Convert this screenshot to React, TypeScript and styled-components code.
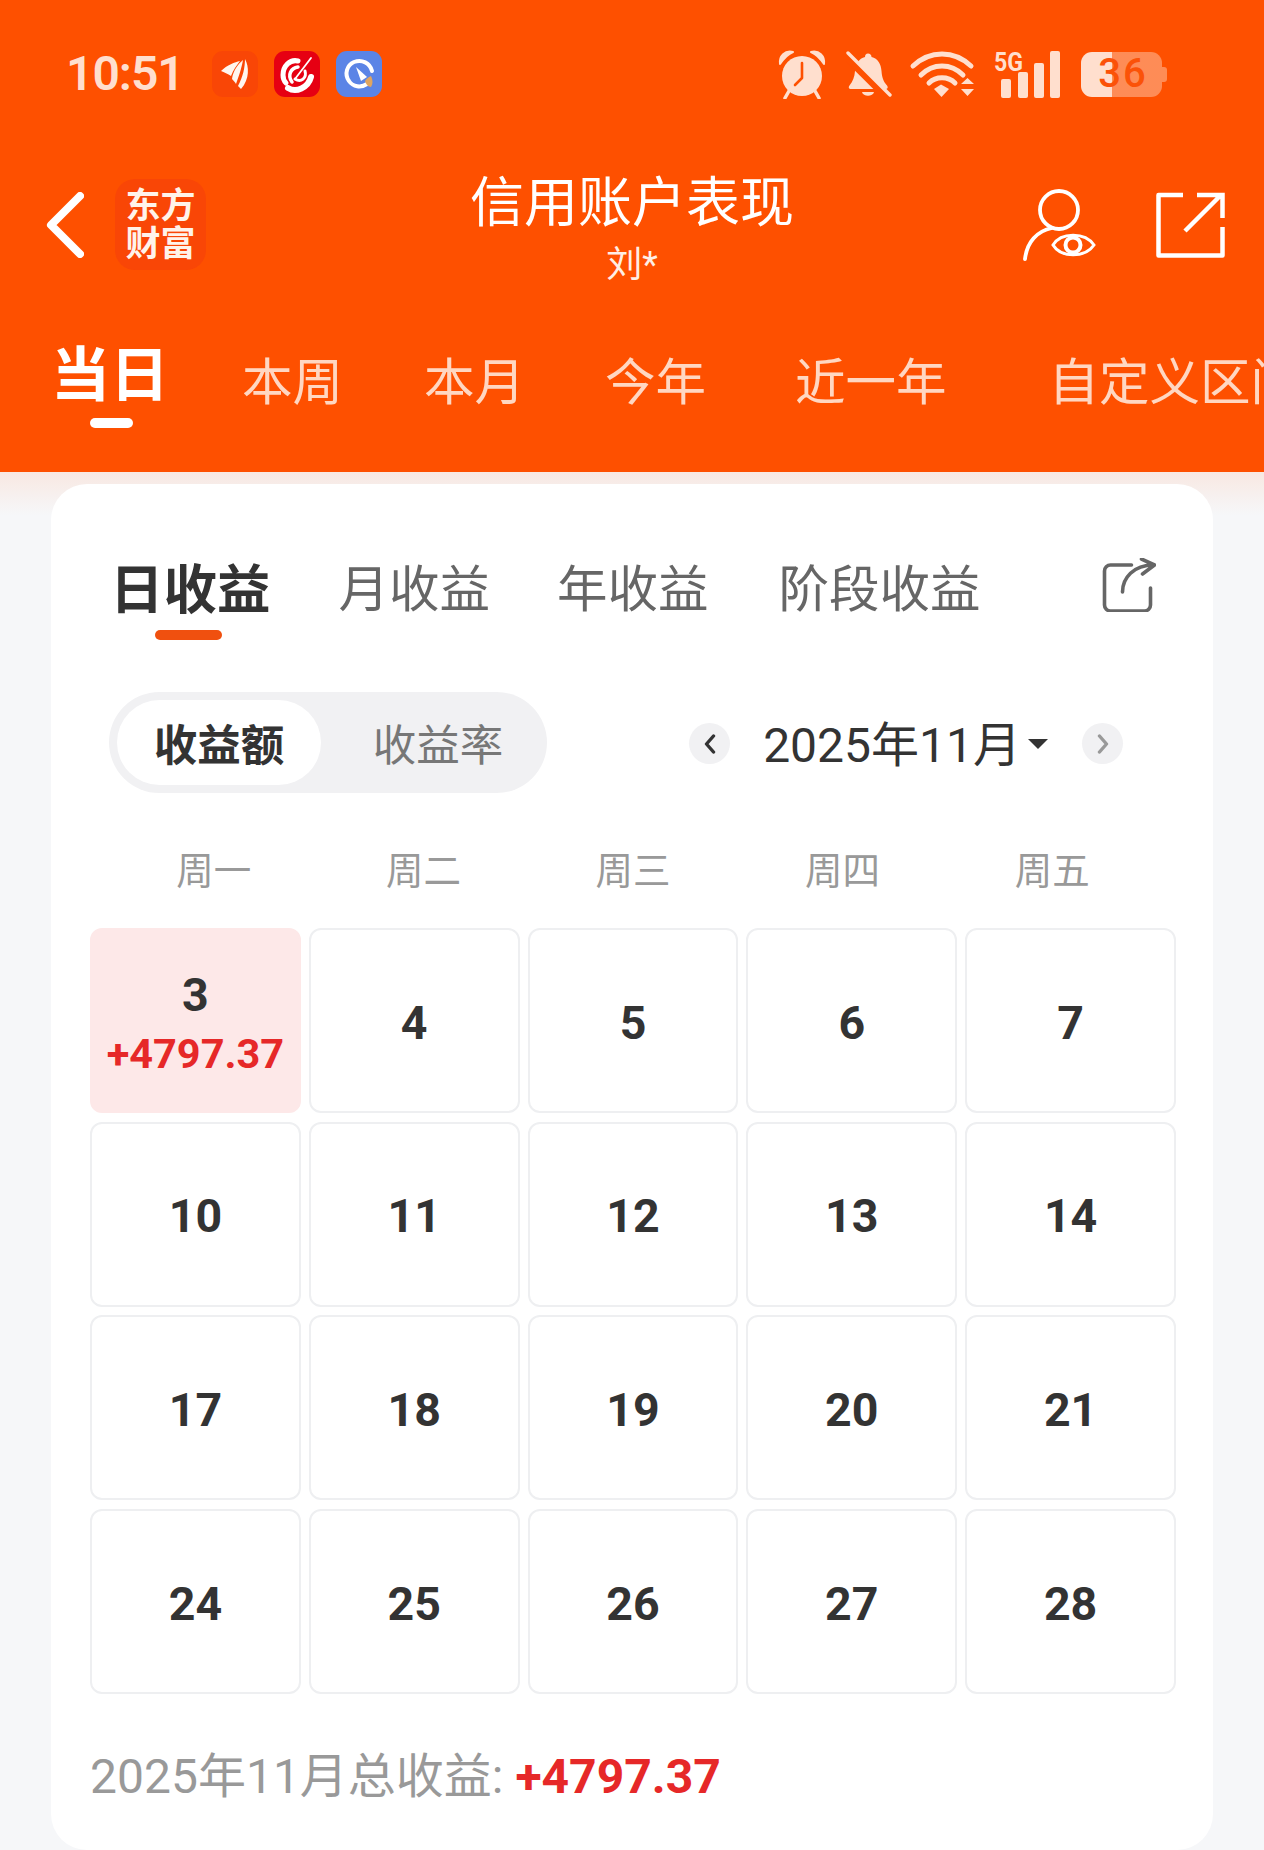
import styled, { createGlobalStyle } from 'styled-components';

const PALE = '#ffdfce';
const ORANGE = '#fe5000';

const GlobalStyle = createGlobalStyle`
  html, body {
    margin: 0;
    padding: 0;
    background: #f6f7f9;
  }
  body {
    font-family: Roboto, "Noto Sans CJK SC", sans-serif;
  }
`;

const Page = styled.div`
  width: 1264px;
  height: 1850px;
  overflow: hidden;
  background: linear-gradient(#f8e8e2 472px, #f6f7f9 515px);
`;

const Header = styled.header`
  height: 472px;
  background: ${ORANGE};
  overflow: hidden;
`;

const StatusBar = styled.div`
  height: 148px;
  padding: 0 97px 0 66px;
  display: flex;
  align-items: center;
  justify-content: space-between;
  color: ${PALE};
`;

const StatusGroup = styled.div<{ $gap: number }>`
  display: flex;
  align-items: center;
  gap: ${(p) => p.$gap}px;
`;

const Clock = styled.span`
  width: 130px;
  font-size: 48px;
  font-weight: 600;
  letter-spacing: -1px;
  line-height: 1;
`;

const AppIcon = styled.div<{ $bg: string }>`
  width: 46px;
  height: 46px;
  border-radius: 11px;
  background: ${(p) => p.$bg};
  display: flex;
`;

const Signal = styled.div`
  position: relative;
  width: 66px;
  height: 47px;
`;

const NetworkBadge = styled.span`
  position: absolute;
  left: 0;
  top: -2px;
  font-size: 26px;
  font-weight: 700;
  line-height: 1;
  transform: scaleX(0.89);
  transform-origin: left center;
`;

const Battery = styled.div`
  display: flex;
  align-items: center;
  margin-left: 1px;
`;

const BatteryBody = styled.div`
  width: 81px;
  height: 45px;
  border-radius: 11px;
  background: linear-gradient(90deg, ${PALE} 38%, rgba(255, 223, 206, 0.42) 38%);
  display: flex;
  align-items: center;
  justify-content: center;
  padding-left: 3px;
  box-sizing: border-box;
  color: #fb5208;
  font-size: 40px;
  font-weight: 500;
  letter-spacing: 2px;
  line-height: 1;
`;

const BatteryTip = styled.div`
  width: 5px;
  height: 15px;
  border-radius: 0 3px 3px 0;
  background: rgba(255, 223, 206, 0.42);
`;

const NavRow = styled.div`
  height: 153px;
  padding: 0 39px;
  display: grid;
  grid-template-columns: 1fr auto 1fr;
  align-items: center;
  color: #fff;
`;

const NavLeft = styled.div`
  padding-left: 7px;
  display: flex;
  align-items: center;
  gap: 31px;
`;

const NavRight = styled.div`
  display: flex;
  align-items: center;
  justify-content: flex-end;
  gap: 60px;
`;

const Logo = styled.div`
  width: 91px;
  height: 91px;
  padding-top: 3px;
  box-sizing: border-box;
  border-radius: 20px;
  background: #f94606;
  display: flex;
  flex-direction: column;
  align-items: center;
  justify-content: center;
  font-size: 35px;
  font-weight: 700;
  line-height: 38px;
  color: #fff3ea;
`;

const TitleBlock = styled.div`
  padding-top: 10px;
  display: flex;
  flex-direction: column;
  align-items: center;
`;

const Title = styled.div`
  font-size: 54px;
  font-weight: 400;
  line-height: 56px;
`;

const SubTitle = styled.div`
  margin-top: 14px;
  font-size: 36px;
  line-height: 38px;
  color: #ffeee5;
`;

const PeriodTabs = styled.nav`
  padding: 45px 0 0 51px;
  display: flex;
  align-items: flex-start;
  white-space: nowrap;
`;

const PeriodTab = styled.div<{ $after: number }>`
  flex: none;
  margin-right: ${(p) => p.$after}px;
  padding-top: 12px;
  font-size: 50.5px;
  line-height: 1;
  color: #ffd7c2;
`;

const ActivePeriodTab = styled.div`
  flex: none;
  margin-right: 73px;
  display: flex;
  flex-direction: column;
  align-items: center;
  font-size: 59px;
  font-weight: 700;
  line-height: 1;
  color: #fff;
`;

const PeriodMark = styled.span`
  width: 43px;
  height: 10px;
  margin: 13px 0 0 2px;
  border-radius: 5px;
  background: #fff;
`;

const Card = styled.main`
  box-sizing: border-box;
  height: 1366px;
  margin: 12px 51px 0;
  padding: 80px 37px 0 39px;
  border-radius: 36px;
  background: #fff;
`;

const ModeTabs = styled.div`
  height: 78px;
  padding: 0 20px 0 20px;
  display: flex;
  align-items: flex-start;
`;

const ModeTab = styled.div<{ $after?: number }>`
  flex: none;
  margin-right: ${(p) => p.$after ?? 0}px;
  padding-top: 1px;
  font-size: 50.5px;
  line-height: 1;
  color: #666;
`;

const ActiveModeTab = styled.div`
  flex: none;
  margin-right: 68px;
  display: flex;
  flex-direction: column;
  align-items: center;
  font-size: 53.5px;
  font-weight: 700;
  line-height: 1;
  color: #333;
`;

const ModeMark = styled.span`
  width: 67px;
  height: 10px;
  margin: 12.5px 3px 0 0;
  border-radius: 5px;
  background: #f0500f;
`;

const ModeShare = styled.div`
  margin-left: auto;
  margin-top: -6px;
`;

const Toolbar = styled.div`
  margin: 50px 53px 0 19px;
  display: flex;
  align-items: center;
  justify-content: space-between;
`;

const Toggle = styled.div`
  width: 438px;
  height: 101px;
  padding: 8px;
  box-sizing: border-box;
  border-radius: 51px;
  background: #f1f1f3;
  display: flex;
  align-items: center;
`;

const ToggleOn = styled.div`
  width: 204px;
  height: 85px;
  border-radius: 43px;
  background: #fff;
  display: flex;
  align-items: center;
  justify-content: center;
  font-size: 43.5px;
  font-weight: 700;
  color: #333;
`;

const ToggleOff = styled.div`
  flex: 1;
  padding-left: 16px;
  text-align: center;
  font-size: 43.5px;
  color: #777;
`;

const MonthNav = styled.div`
  margin-top: 2px;
  display: flex;
  align-items: center;
`;

const MonthButton = styled.div`
  width: 41px;
  height: 41px;
  border-radius: 50%;
  background: #f1f1f3;
  display: flex;
  align-items: center;
  justify-content: center;
`;

const MonthLabel = styled.div`
  margin: 4px 7px 0 33px;
  font-size: 48px;
  line-height: 1;
  color: #333;
`;

const MonthCaret = styled.span`
  width: 0;
  height: 0;
  margin-right: 34px;
  border-left: 10px solid transparent;
  border-right: 10px solid transparent;
  border-top: 10px solid #333;
`;

const WeekRow = styled.div`
  margin: 58px 19px 0 19px;
  display: grid;
  grid-template-columns: repeat(5, 1fr);
  text-align: center;
  font-size: 37.5px;
  line-height: 40px;
  color: #999;
`;

const DayGrid = styled.div`
  margin-top: 37px;
  display: grid;
  grid-template-columns: repeat(5, 1fr);
  grid-auto-rows: 185px;
  gap: 8.7px 8px;
`;

const DayCell = styled.div<{ $active?: boolean }>`
  box-sizing: border-box;
  padding-top: 5px;
  border: 2px solid ${(p) => (p.$active ? '#fde8e8' : '#eeeff1')};
  border-radius: 12px;
  background: ${(p) => (p.$active ? '#fde8e8' : '#fff')};
  display: flex;
  flex-direction: column;
  align-items: center;
  justify-content: center;
  color: #333;
  font-size: 46.5px;
  font-weight: 700;
  line-height: 1;
`;

const DayProfit = styled.div`
  margin-top: 15px;
  font-size: 41.5px;
  color: #e62828;
`;

const Total = styled.div`
  margin-top: 55px;
  font-size: 48px;
  line-height: 56px;
  color: #999;
`;

const TotalValue = styled.b`
  color: #e62828;
`;

const AlarmIcon = () => (
  <svg width="48" height="50" viewBox="0 0 48 50">
    <circle cx="24" cy="27" r="20" fill={PALE} />
    <path d="M2 15C1 7 7 1 15 3C10 5 6 9 2 15Z" fill={PALE} stroke={PALE} strokeWidth="2" strokeLinejoin="round" />
    <path d="M46 15C47 7 41 1 33 3C38 5 42 9 46 15Z" fill={PALE} stroke={PALE} strokeWidth="2" strokeLinejoin="round" />
    <path d="M11 42L7 49M37 42L41 49" stroke={PALE} strokeWidth="3.5" strokeLinecap="round" />
    <path d="M24 14V29L17 36" fill="none" stroke={ORANGE} strokeWidth="2.6" strokeLinecap="round" strokeLinejoin="round" />
  </svg>
);

const MutedBellIcon = () => (
  <svg width="46" height="46" viewBox="0 0 46 46">
    <path
      d="M22 2.5C24 2.5 25.5 4 25.5 6C32 7.5 35 13 35.500 20C36 26 37 30 41 34.500C42.500 36.500 41.500 38 39.500 38H5C3 38 2 36.500 3.500 34.500C7 30 8.500 26 9 20C9.500 13 13 7.500 19 6C19 4 20 2.500 22 2.500Z"
      fill={PALE}
    />
    <path d="M16 41H28C27 46 17 46 16 41Z" fill={PALE} />
    <path d="M-1 4L41 46" stroke={ORANGE} strokeWidth="8" />
    <path d="M2 2L44 44" stroke={PALE} strokeWidth="3.400" strokeLinecap="round" />
  </svg>
);

const WifiIcon = () => (
  <svg width="62" height="46" viewBox="2 0 62 46" overflow="visible" fill="none">
    <path d="M3 15C20 -1 44 -1 61 15" stroke={PALE} strokeWidth="5" strokeLinecap="round" />
    <path d="M11 24C23 12 41 12 53 24" stroke={PALE} strokeWidth="5" strokeLinecap="round" />
    <path d="M19 32C26 25 38 25 45 32" stroke={PALE} strokeWidth="5" strokeLinecap="round" />
    <path d="M24 38L31 33.500L39 38L31.500 46Z" fill={PALE} />
    <path d="M51 33L57.500 27L64 33ZM51 38H64L57.500 45Z" fill={PALE} />
  </svg>
);

const SignalBars = () => (
  <svg width="66" height="47" viewBox="0 0 66 47">
    <rect x="7" y="28" width="10" height="19" rx="2" fill={PALE} />
    <rect x="24" y="21" width="10" height="26" rx="2" fill={PALE} />
    <rect x="40" y="12" width="10" height="35" rx="2" fill={PALE} />
    <rect x="56" y="0" width="10" height="47" rx="2" fill={PALE} />
  </svg>
);

const EastmoneyGlyph = () => (
  <svg width="46" height="46" viewBox="0 0 46 46" fill="#fff6ef">
    <path d="M9 20C15 14 23 11 28 10C25 14 21 19 19 25C16 23 12 21 9 20Z" />
    <path d="M20 28C21 20 26 13 31 9C30 15 28 22 24 33C23 31 21 29 20 28Z" />
    <path d="M26 35C31 26 33 16 33 8C37 15 38 28 29 38C28 37 27 36 26 35Z" />
  </svg>
);

const SwirlGlyph = () => (
  <svg width="46" height="46" viewBox="0 0 46 46" fill="none" stroke="#fff" strokeLinecap="round">
    <path d="M24 10C16 8 9 15 9 24C9 28 10 30 12 32" strokeWidth="5" />
    <path d="M14 37C22 42 34 37 37 26" strokeWidth="6" />
    <path d="M18 31C13 24 17 17 24 16" strokeWidth="3.500" />
    <path d="M21 28C27 32 33 27 31 20" strokeWidth="3" />
    <path d="M21 28L37 7" strokeWidth="1.800" />
  </svg>
);

const GaugeGlyph = () => (
  <svg width="46" height="46" viewBox="0 0 46 46" fill="none">
    <path d="M31 33C25 37 17 36 13 30C8 23 11 14 18 11C26 8 34 12 36 20" stroke="#fff" strokeWidth="4" strokeLinecap="round" />
    <path d="M20 16L31 26L25 30Z" fill="#fff" />
    <path d="M29 30C31 27 33 26 35 25C37 29 37 33 35 36C32 36 30 33 29 30Z" fill="#e0a560" />
  </svg>
);

const BackIcon = () => (
  <svg width="38" height="66" viewBox="0 0 38 66" fill="none">
    <path d="M34 4L5 33L34 62" stroke="#fff" strokeWidth="8" strokeLinecap="round" strokeLinejoin="round" />
  </svg>
);

const ViewerIcon = () => (
  <svg width="73" height="72" viewBox="0 0 73 72" fill="none" stroke="#fff">
    <circle cx="36" cy="21" r="19" strokeWidth="3.800" />
    <path d="M29 39C14 42 4 53 2 70" strokeWidth="3.800" strokeLinecap="round" />
    <path d="M30 56C38 43 62 43 71 56C62 69 38 69 30 56Z" fill={ORANGE} strokeWidth="3" />
    <circle cx="50" cy="56" r="7.500" strokeWidth="4" />
  </svg>
);

const ExportIcon = () => (
  <svg width="69" height="66" viewBox="0 0 69 66" fill="none" stroke="#fff" strokeWidth="4.500">
    <path d="M27 3H2.500V63.500H66.500V35" strokeLinejoin="round" />
    <path d="M29 39L65 3M41 3H66.500V26" />
  </svg>
);

const ShareIcon = () => (
  <svg width="55" height="54" viewBox="0 0 54 54" fill="none" stroke="#666" strokeWidth="3.600" strokeLinecap="round" strokeLinejoin="round" style={{ display: 'block' }}>
    <path d="M30 7H9A6 6 0 0 0 3 13V47A6 6 0 0 0 9 53H43A6 6 0 0 0 49 47V30" />
    <path d="M21 34C21 20 32 7 52 7M40 1L53 7L41 16" />
  </svg>
);

const ChevronLeft = () => (
  <svg width="12" height="20" viewBox="0 0 12 20" fill="none" stroke="#333" strokeWidth="3.400" strokeLinecap="round" strokeLinejoin="round">
    <path d="M9.500 2L2.500 10L9.500 18" />
  </svg>
);

const ChevronRight = () => (
  <svg width="12" height="20" viewBox="0 0 12 20" fill="none" stroke="#999" strokeWidth="3.400" strokeLinecap="round" strokeLinejoin="round">
    <path d="M2.500 2L9.500 10L2.500 18" />
  </svg>
);

const periods = [
  { label: '本周', after: 81 },
  { label: '本月', after: 80 },
  { label: '今年', after: 89 },
  { label: '近一年', after: 102 },
  { label: '自定义区间', after: 0 },
];

const weekdays = ['周一', '周二', '周三', '周四', '周五'];
const days = [4, 5, 6, 7, 10, 11, 12, 13, 14, 17, 18, 19, 20, 21, 24, 25, 26, 27, 28];

export default function App() {
  return (
    <Page>
      <GlobalStyle />
      <Header>
        <StatusBar>
          <StatusGroup $gap={16}>
            <Clock>10:51</Clock>
            <AppIcon $bg="#f94606">
              <EastmoneyGlyph />
            </AppIcon>
            <AppIcon $bg="#e60012">
              <SwirlGlyph />
            </AppIcon>
            <AppIcon $bg="#5b84e6">
              <GaugeGlyph />
            </AppIcon>
          </StatusGroup>
          <StatusGroup $gap={20}>
            <AlarmIcon />
            <MutedBellIcon />
            <WifiIcon />
            <Signal>
              <SignalBars />
              <NetworkBadge>5G</NetworkBadge>
            </Signal>
            <Battery>
              <BatteryBody>36</BatteryBody>
              <BatteryTip />
            </Battery>
          </StatusGroup>
        </StatusBar>

        <NavRow>
          <NavLeft>
            <BackIcon />
            <Logo>
              <span>东方</span>
              <span>财富</span>
            </Logo>
          </NavLeft>
          <TitleBlock>
            <Title>信用账户表现</Title>
            <SubTitle>刘*</SubTitle>
          </TitleBlock>
          <NavRight>
            <ViewerIcon />
            <ExportIcon />
          </NavRight>
        </NavRow>

        <PeriodTabs>
          <ActivePeriodTab>
            当日
            <PeriodMark />
          </ActivePeriodTab>
          {periods.map((period) => (
            <PeriodTab key={period.label} $after={period.after}>
              {period.label}
            </PeriodTab>
          ))}
        </PeriodTabs>
      </Header>

      <Card>
        <ModeTabs>
          <ActiveModeTab>
            日收益
            <ModeMark />
          </ActiveModeTab>
          <ModeTab $after={67}>月收益</ModeTab>
          <ModeTab $after={70}>年收益</ModeTab>
          <ModeTab>阶段收益</ModeTab>
          <ModeShare>
            <ShareIcon />
          </ModeShare>
        </ModeTabs>

        <Toolbar>
          <Toggle>
            <ToggleOn>收益额</ToggleOn>
            <ToggleOff>收益率</ToggleOff>
          </Toggle>
          <MonthNav>
            <MonthButton>
              <ChevronLeft />
            </MonthButton>
            <MonthLabel>2025年11月</MonthLabel>
            <MonthCaret />
            <MonthButton>
              <ChevronRight />
            </MonthButton>
          </MonthNav>
        </Toolbar>

        <WeekRow>
          {weekdays.map((day) => (
            <div key={day}>{day}</div>
          ))}
        </WeekRow>

        <DayGrid>
          <DayCell $active>
            3<DayProfit>+4797.37</DayProfit>
          </DayCell>
          {days.map((day) => (
            <DayCell key={day}>{day}</DayCell>
          ))}
        </DayGrid>

        <Total>
          2025年11月总收益: <TotalValue>+4797.37</TotalValue>
        </Total>
      </Card>
    </Page>
  );
}
